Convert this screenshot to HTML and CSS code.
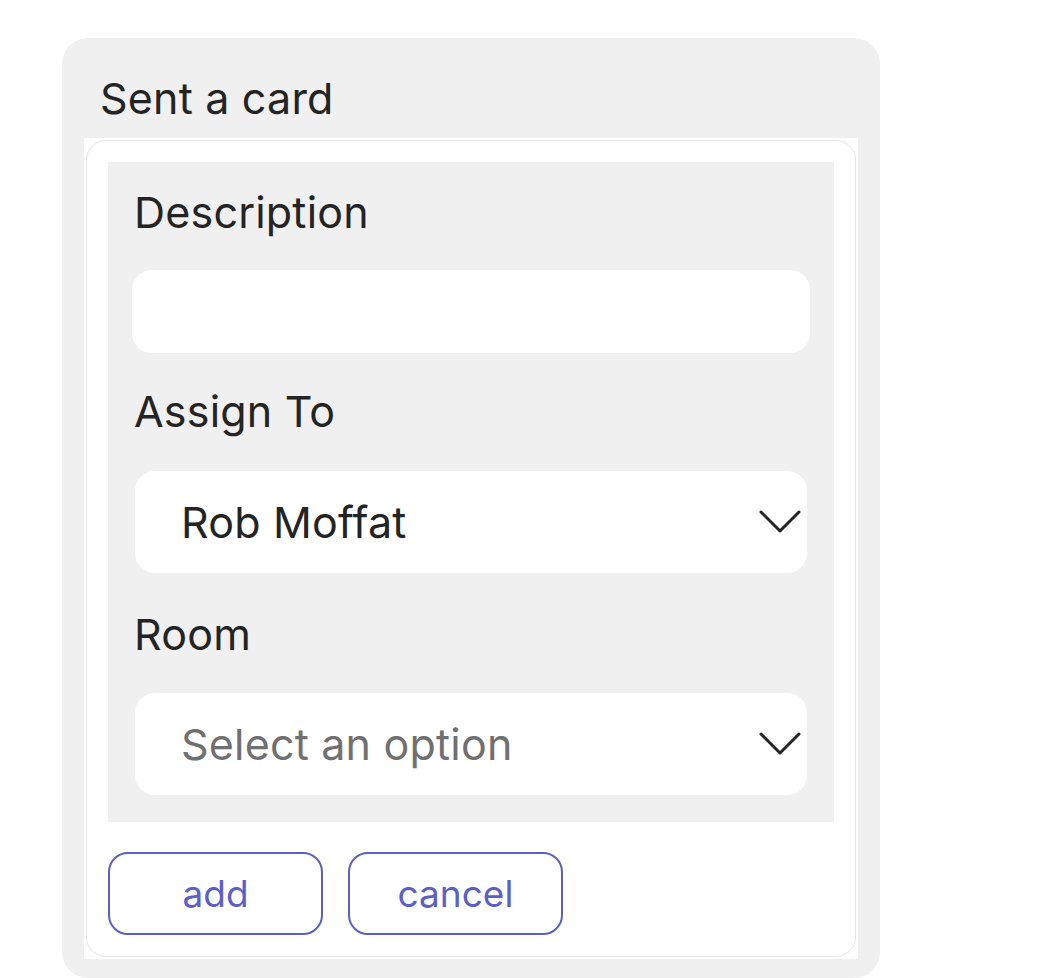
FILE: index.html
```html
<!DOCTYPE html>
<html>
<head>
<meta charset="utf-8">
<link rel="stylesheet" href="styles.css">
</head>
<body>
<div class="card">
  <div class="title">Sent a card</div>
  <div class="sheet">
    <div class="inner">
      <div class="form">
        <div class="label label-first">Description</div>
        <div class="input"></div>
        <div class="label label-mid">Assign To</div>
        <div class="select">
          <span class="value">Rob Moffat</span>
          <svg class="chev" width="42" height="24" viewBox="0 0 42 24"><path d="M2 2 L21 21 L40 2" fill="none" stroke="#242424" stroke-width="3" stroke-linecap="round" stroke-linejoin="round"/></svg>
        </div>
        <div class="label label-mid2">Room</div>
        <div class="select">
          <span class="value placeholder">Select an option</span>
          <svg class="chev" width="42" height="24" viewBox="0 0 42 24"><path d="M2 2 L21 21 L40 2" fill="none" stroke="#242424" stroke-width="3" stroke-linecap="round" stroke-linejoin="round"/></svg>
        </div>
      </div>
      <div class="actions">
        <button class="btn">add</button>
        <button class="btn">cancel</button>
      </div>
    </div>
  </div>
</div>
</body>
</html>
```
FILE: styles.css
```css
html, body {
  margin: 0;
  padding: 0;
  background: #ffffff;
}
body {
  font-family: Inter, "Noto Sans", sans-serif;
  color: #242424;
}
.card {
  margin: 38px 0 0 62px;
  width: 818px;
  background: #f0f0f0;
  border-radius: 26px;
  padding-bottom: 19px;
}
.title {
  box-sizing: border-box;
  height: 100px;
  padding: 34px 0 0 38px;
  font-size: 43px;
  line-height: 52px;
  letter-spacing: 0.2px;
}
.sheet {
  margin-left: 22px;
  width: 774px;
  background: #ffffff;
  padding: 2px;
  box-sizing: border-box;
}
.inner {
  border: 1px solid #e6e6e6;
  border-radius: 20px;
  padding: 21px;
}
.form {
  background: #f0f0f0;
  padding: 0 24px 27px 24px;
}
.label {
  font-size: 43px;
  line-height: 52px;
  letter-spacing: 0.2px;
  padding-left: 2px;
}
.label-first { padding-top: 24px; margin-bottom: 32px; }
.label-mid { margin-top: 32px; margin-bottom: 34px; }
.label-mid2 { margin-top: 35px; margin-bottom: 33px; }
.input {
  height: 83px;
  background: #ffffff;
  border-radius: 20px;
}
.select {
  height: 102px;
  margin: 0 3px;
  background: #ffffff;
  border-radius: 20px;
  display: flex;
  align-items: center;
  justify-content: space-between;
  padding: 0 6px 0 46px;
}
.value {
  font-size: 43px;
  line-height: 52px;
  letter-spacing: 0.2px;
}
.placeholder {
  color: #707070;
}
.chev {
  display: block;
}
.actions {
  display: flex;
  gap: 25px;
  padding-top: 30px;
}
.btn {
  width: 215px;
  height: 83px;
  background: #ffffff;
  border: 2px solid #5b5fc7;
  border-radius: 20px;
  color: #5b5fc7;
  font-family: Inter, "Noto Sans", sans-serif;
  font-size: 37px;
  padding: 0;
}
```
